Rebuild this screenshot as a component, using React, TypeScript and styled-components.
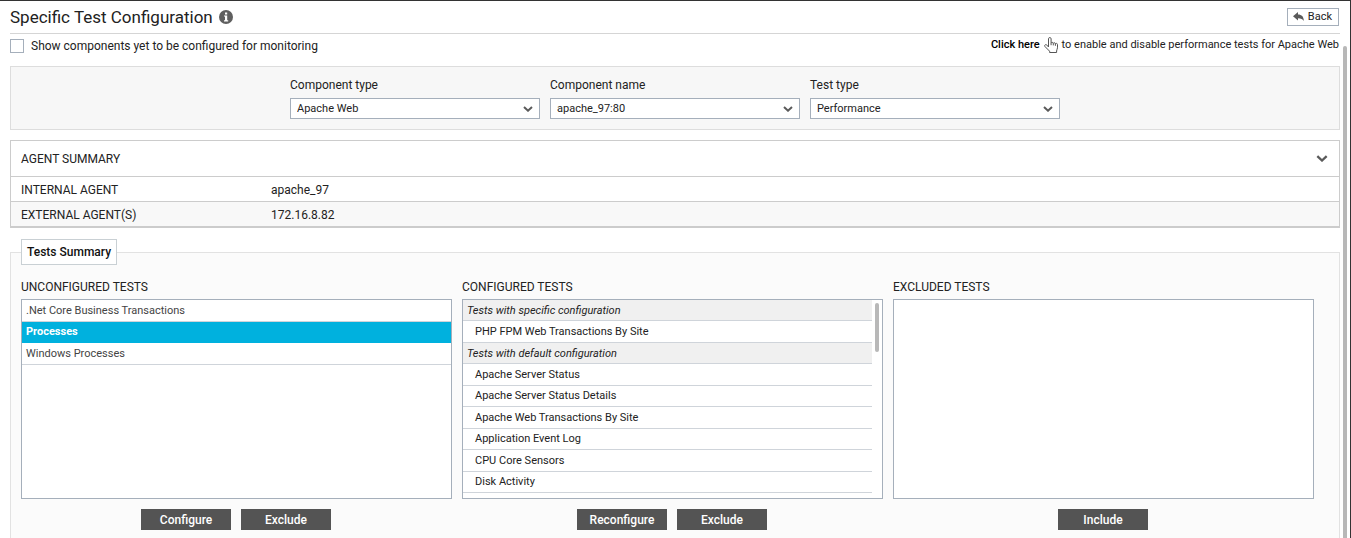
import React, { useState } from 'react';
import styled, { createGlobalStyle, css } from 'styled-components';

const GlobalStyle = createGlobalStyle`
  * { box-sizing: border-box; }
  body {
    margin: 0;
    background: #fff;
    color: #222;
    font: 12px/16px Roboto, "Liberation Sans", sans-serif;
  }
  button, select, input { font: inherit; color: inherit; margin: 0; }
`;

const Frame = styled.div`
  display: flex;
  height: 100vh;
  overflow: hidden;
  border-top: 1px solid #333;
  border-right: 1px solid #333;
`;

const Page = styled.main`
  flex: 1;
  min-width: 0;
  display: flex;
  flex-direction: column;
  padding-left: 10px;
`;

const PageTrack = styled.div`
  width: 10px;
  flex: none;
  padding: 45px 3px 0;
`;

const PageThumb = styled.div`
  height: 100%;
  background: #b8b8b8;
  border-radius: 2px 2px 0 0;
`;

const TitleBar = styled.header`
  display: flex;
  align-items: center;
  justify-content: space-between;
  height: 33px;
  flex: none;
  padding-right: 1px;
  border-bottom: 1px solid #d5d5d5;
`;

const Title = styled.h1`
  display: flex;
  align-items: center;
  gap: 6px;
  margin: 0;
  font-size: 17px;
  line-height: 20px;
  font-weight: 400;
`;

const BackButton = styled.button`
  display: flex;
  align-items: center;
  gap: 4px;
  height: 18px;
  padding: 0 6px 0 5px;
  border: 1px solid #a5afbb;
  background: #fff;
  font-size: 11px;
`;

const OptionBar = styled.div`
  display: flex;
  justify-content: space-between;
  height: 32px;
  flex: none;
  padding: 2px 1px 0 0;
`;

const CheckLabel = styled.label`
  display: flex;
  align-items: center;
  gap: 7px;
  height: 20px;
`;

const CheckBox = styled.input`
  appearance: none;
  width: 14px;
  height: 14px;
  border: 1px solid #a5afbb;
  background: #fff;
  &:checked { background: #00b1de; }
`;

const Hint = styled.p`
  display: flex;
  align-items: center;
  gap: 4px;
  height: 18px;
  margin: 0;
  font-size: 11px;
`;

const HintLink = styled.a`
  color: #000;
  font-weight: 500;
  text-decoration: none;
`;

const Filters = styled.section`
  display: flex;
  justify-content: center;
  gap: 10px;
  height: 64px;
  flex: none;
  padding-top: 10px;
  border: 1px solid #ddd;
  background: #f7f7f7;
`;

const Field = styled.label`
  display: flex;
  flex-direction: column;
  gap: 5px;
  width: 250px;
`;

const SelectBox = styled.span`
  position: relative;
  display: block;
  svg { position: absolute; right: 7px; top: 8px; pointer-events: none; }
`;

const Select = styled.select`
  display: block;
  appearance: none;
  width: 100%;
  height: 21px;
  padding: 0 24px 0 6px;
  border: 1px solid #a5afbb;
  border-radius: 0;
  background: #fff;
  font-size: 11px;
`;

const Agent = styled.section`
  flex: none;
  margin-top: 10px;
  border: 1px solid #ccc;
  border-bottom-width: 2px;
`;

const AgentHeader = styled.button`
  display: flex;
  align-items: center;
  justify-content: space-between;
  width: 100%;
  height: 35px;
  padding: 0 11px 0 10px;
  border: 0;
  background: #fff;
`;

const AgentTable = styled.table`
  width: 100%;
  border-collapse: separate;
  border-spacing: 0;
  th, td {
    height: 25px;
    padding: 1px 0 0;
    border-top: 1px solid #ccc;
    font-weight: 400;
    text-align: left;
  }
  th { width: 260px; padding-left: 10px; }
  td { width: auto; }
  tr:last-child { background: #f8f8f8; }
`;

const Summary = styled.fieldset`
  flex: 1;
  min-width: 0;
  margin: 11px 0 0;
  padding: 0 25px 0 10px;
  border: 1px solid #e2e2e2;
  border-bottom: 0;
  background: #fbfbfb;
`;

const Legend = styled.legend`
  padding: 4px 5px;
  border: 1px solid #c9d0d4;
  background: #fff;
  color: #111;
  font-weight: 500;
`;

const Columns = styled.div`
  display: grid;
  grid-template-columns: 43fr 42fr 42fr;
  gap: 10px;
  padding-top: 14px;
`;

const Column = styled.section`
  min-width: 0;
`;

const ColumnTitle = styled.h2`
  margin: 0 0 4px;
  font-size: 12px;
  line-height: 16px;
  font-weight: 400;
`;

const ListBox = styled.div`
  display: flex;
  height: 200px;
  border: 1px solid #a5afbb;
  background: #fff;
`;

const List = styled.ul<{ $height: number }>`
  flex: 1;
  display: grid;
  grid-auto-rows: 1fr;
  height: ${(p) => p.$height}px;
  margin: 0;
  padding: 0;
  list-style: none;
  font-size: 11px;
  line-height: 16px;
`;

const Row = styled.li<{ $kind: 'plain' | 'group' | 'nested' | 'selected' }>`
  display: flex;
  align-items: center;
  padding: 1px 0 0 ${(p) => (p.$kind === 'nested' ? 12 : 4)}px;
  border-bottom: 1px solid #cfd4da;
  ${(p) => p.$kind === 'plain' && css`color: #444;`}
  ${(p) => p.$kind === 'group' && css`
    background: #f0f0f0;
    font-style: italic;
  `}
  ${(p) => p.$kind === 'selected' && css`
    background: #00b1de;
    border-color: #00b1de;
    color: #fff;
    font-weight: 700;
  `}
`;

const ListTrack = styled.div`
  width: 10px;
  padding: 3px 3px 0;
`;

const ListThumb = styled.div`
  height: 49px;
  border-radius: 2px;
  background: #b8b8b8;
`;

const Actions = styled.div`
  display: flex;
  justify-content: center;
  gap: 10px;
  margin-top: 10px;
  padding-right: 1px;
`;

const ActionButton = styled.button`
  width: 90px;
  height: 21px;
  padding: 0;
  border: 0;
  background: #545454;
  color: #fff;
  font-size: 12px;
  font-weight: 500;
`;

const Chevron = ({ size = 8 }: { size?: number }) => (
  <svg width={size + 2} height={(size + 4) / 2} viewBox="0 0 10 6" fill="none" aria-hidden="true">
    <path d="M1 1l4 3.7L9 1" stroke="#5a5a5a" strokeWidth="2" />
  </svg>
);

const InfoIcon = () => (
  <svg width="14" height="14" viewBox="0 0 14 14" aria-hidden="true">
    <circle cx="7" cy="7" r="7" fill="#5f5f5f" />
    <path d="M6 2.4h2.2v2H6zM5 5.4h3.2v4.8h1v1.2H5v-1.2h1V6.6H5z" fill="#fff" />
  </svg>
);

const ReplyIcon = () => (
  <svg width="11" height="10" viewBox="0 0 11 10" aria-hidden="true">
    <path d="M0 4.2L5 0v2.4c3.6 0 5.8 2 5.8 6.6C9.6 7 8 6.2 5 6.2v2.4z" fill="#5a5a5a" />
  </svg>
);

const HandIcon = () => (
  <svg width="14" height="16" viewBox="0 0 14 16" fill="none" aria-hidden="true">
    <path
      d="M4.5 10V1.8c0-1.7 2.6-1.7 2.6 0v4.4c.3-1.2 2.1-1.1 2.2.2.3-1 2-.9 2.1.4.4-.8 2.1-.6 2.1.8v3.2c0 1-.9 1.900-.9 3.200v1.500H5.600v-1.300L1 9.600C-.1 8.300 1.700 6.800 2.900 8.100L4.500 10M7.100 6.200v2M9.300 6.400v2M11.400 6.800v2"
      stroke="#555"
      strokeWidth="1"
      strokeLinejoin="round"
    />
  </svg>
);

const filters = [
  { label: 'Component type', value: 'Apache Web' },
  { label: 'Component name', value: 'apache_97:80' },
  { label: 'Test type', value: 'Performance' },
];

const unconfigured = ['.Net Core Business Transactions', 'Processes', 'Windows Processes'];

const configured: { name: string; group?: boolean }[] = [
  { name: 'Tests with specific configuration', group: true },
  { name: 'PHP FPM Web Transactions By Site' },
  { name: 'Tests with default configuration', group: true },
  { name: 'Apache Server Status' },
  { name: 'Apache Server Status Details' },
  { name: 'Apache Web Transactions By Site' },
  { name: 'Application Event Log' },
  { name: 'CPU Core Sensors' },
  { name: 'Disk Activity' },
];

export default function App() {
  const [selected, setSelected] = useState('Processes');
  const [open, setOpen] = useState(true);

  return (
    <>
      <GlobalStyle />
      <Frame>
        <Page>
          <TitleBar>
            <Title>Specific Test Configuration <InfoIcon /></Title>
            <BackButton type="button"><ReplyIcon />Back</BackButton>
          </TitleBar>
          <OptionBar>
            <CheckLabel>
              <CheckBox type="checkbox" />
              Show components yet to be configured for monitoring
            </CheckLabel>
            <Hint>
              <HintLink href="#tests">Click here</HintLink>
              <HandIcon />
              to enable and disable performance tests for Apache Web
            </Hint>
          </OptionBar>
          <Filters>
            {filters.map((f) => (
              <Field key={f.label}>
                {f.label}
                <SelectBox>
                  <Select defaultValue={f.value}>
                    <option>{f.value}</option>
                  </Select>
                  <Chevron />
                </SelectBox>
              </Field>
            ))}
          </Filters>
          <Agent>
            <AgentHeader type="button" aria-expanded={open} onClick={() => setOpen(!open)}>
              AGENT SUMMARY
              <Chevron size={10} />
            </AgentHeader>
            {open && (
              <AgentTable>
                <tbody>
                  <tr><th scope="row">INTERNAL AGENT</th><td>apache_97</td></tr>
                  <tr><th scope="row">EXTERNAL AGENT(S)</th><td>172.16.8.82</td></tr>
                </tbody>
              </AgentTable>
            )}
          </Agent>
          <Summary id="tests">
            <Legend>Tests Summary</Legend>
            <Columns>
              <Column>
                <ColumnTitle>UNCONFIGURED TESTS</ColumnTitle>
                <ListBox>
                  <List $height={65}>
                    {unconfigured.map((name) => (
                      <Row
                        key={name}
                        $kind={name === selected ? 'selected' : 'plain'}
                        onClick={() => setSelected(name)}
                      >
                        {name}
                      </Row>
                    ))}
                  </List>
                </ListBox>
                <Actions>
                  <ActionButton type="button">Configure</ActionButton>
                  <ActionButton type="button">Exclude</ActionButton>
                </Actions>
              </Column>
              <Column>
                <ColumnTitle>CONFIGURED TESTS</ColumnTitle>
                <ListBox>
                  <List $height={193}>
                    {configured.map((t) => (
                      <Row key={t.name} $kind={t.group ? 'group' : 'nested'}>{t.name}</Row>
                    ))}
                  </List>
                  <ListTrack><ListThumb /></ListTrack>
                </ListBox>
                <Actions>
                  <ActionButton type="button">Reconfigure</ActionButton>
                  <ActionButton type="button">Exclude</ActionButton>
                </Actions>
              </Column>
              <Column>
                <ColumnTitle>EXCLUDED TESTS</ColumnTitle>
                <ListBox />
                <Actions>
                  <ActionButton type="button">Include</ActionButton>
                </Actions>
              </Column>
            </Columns>
          </Summary>
        </Page>
        <PageTrack><PageThumb /></PageTrack>
      </Frame>
    </>
  );
}
